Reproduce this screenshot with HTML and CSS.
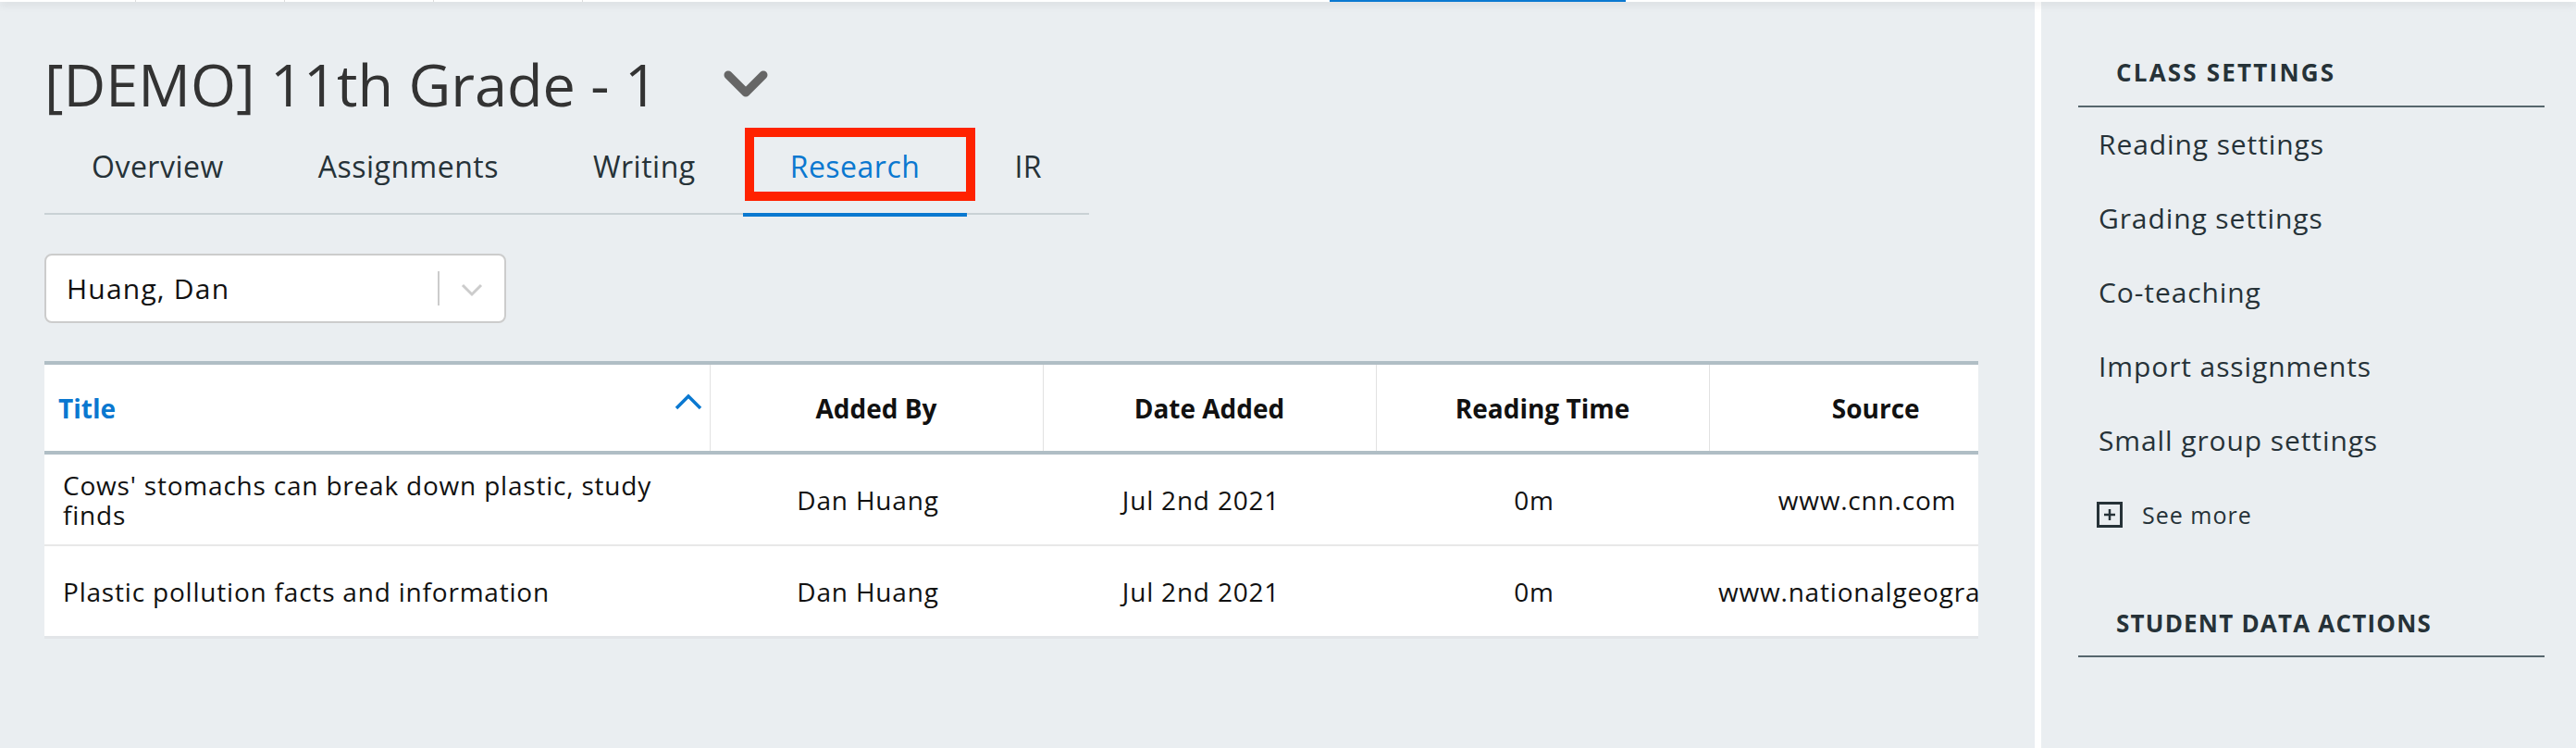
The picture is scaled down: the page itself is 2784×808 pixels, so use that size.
FILE: index.html
```html
<!DOCTYPE html>
<html lang="en">

<head>
  <meta charset="UTF-8">
  <meta name="viewport" content="width=device-width, initial-scale=1.0">
  <title>[DEMO] 11th Grade - 1 | Research</title>
  <link rel="stylesheet" href="styles.css">
</head>

<body>
  <div class="topbar">
    <div class="top-item"></div>
    <div class="top-item"></div>
    <div class="top-item"></div>
    <div class="top-item"></div>
    <div class="top-active"></div>
  </div>

  <div class="layout">
    <main class="main">
      <div class="class-title">
        <h1>[DEMO] 11th Grade - 1</h1>
        <svg class="title-caret" width="48" height="30" viewBox="0 0 48 30">
          <polyline points="5,5 24,24 43,5" fill="none" stroke="#666" stroke-width="9" stroke-linecap="round" stroke-linejoin="round" />
        </svg>
      </div>

      <nav class="tabs">
        <a class="tab">Overview</a>
        <a class="tab">Assignments</a>
        <a class="tab">Writing</a>
        <a class="tab active">Research<span class="highlight"></span></a>
        <a class="tab">IR</a>
      </nav>

      <div class="student-select">
        <span class="select-value">Huang, Dan</span>
        <span class="select-sep"></span>
        <svg class="select-caret" width="26" height="16" viewBox="0 0 26 16">
          <polyline points="3,3 13,13 23,3" fill="none" stroke="#cccccc" stroke-width="3" />
        </svg>
      </div>

      <div class="table-wrap">
        <table class="research-table">
          <colgroup>
            <col class="col-title">
            <col class="col-small">
            <col class="col-small">
            <col class="col-small">
            <col class="col-small">
          </colgroup>
          <thead>
            <tr>
              <th class="th-title">
                <div class="th-sort">
                  <span>Title</span>
                  <svg width="30" height="20" viewBox="0 0 30 20">
                    <polyline points="2,17 15,4 28,17" fill="none" stroke="#0a78d0" stroke-width="3.5" />
                  </svg>
                </div>
              </th>
              <th>Added By</th>
              <th>Date Added</th>
              <th>Reading Time</th>
              <th>Source</th>
            </tr>
          </thead>
          <tbody>
            <tr>
              <td class="td-title">Cows' stomachs can break down plastic, study finds</td>
              <td>Dan Huang</td>
              <td>Jul 2nd 2021</td>
              <td>0m</td>
              <td>www.cnn.com</td>
            </tr>
            <tr>
              <td class="td-title">Plastic pollution facts and information</td>
              <td>Dan Huang</td>
              <td>Jul 2nd 2021</td>
              <td>0m</td>
              <td>www.nationalgeographic.com</td>
            </tr>
          </tbody>
        </table>
      </div>
    </main>

    <aside class="sidebar">
      <h3 class="side-title">CLASS SETTINGS</h3>
      <ul class="side-list">
        <li>Reading settings</li>
        <li>Grading settings</li>
        <li>Co-teaching</li>
        <li>Import assignments</li>
        <li>Small group settings</li>
      </ul>
      <div class="see-more">
        <svg width="28" height="28" viewBox="0 0 28 28">
          <rect x="1.5" y="1.5" width="25" height="25" fill="none" stroke="#263238" stroke-width="3" />
          <line x1="8" y1="14" x2="20" y2="14" stroke="#263238" stroke-width="2.5" />
          <line x1="14" y1="8" x2="14" y2="20" stroke="#263238" stroke-width="2.5" />
        </svg>
        <span>See more</span>
      </div>
      <h3 class="side-title second">STUDENT DATA ACTIONS</h3>
    </aside>
  </div>
</body>

</html>
```

FILE: styles.css
```css
body {
  margin: 0;
  font-family: "Open Sans", "Noto Sans", sans-serif;
  background: #eaeef1;
  color: #263238;
}

.topbar {
  display: flex;
  height: 2px;
  background: white;
  box-shadow: 0 2px 8px rgba(0, 0, 0, 0.22);
  position: relative;
  z-index: 2;
}

.top-item {
  width: 160px;
  border-right: 1px solid #dddddd;
}

.top-item:first-child {
  width: 146px;
}

.top-active {
  width: 320px;
  margin-left: 807px;
  background: #0a78d0;
}

.layout {
  display: flex;
  min-height: 806px;
}

.main {
  width: 2199px;
  padding: 49px 61px 0 48px;
  box-sizing: border-box;
}

/* title row */
.class-title {
  display: flex;
  align-items: center;
  gap: 71px;
}

.class-title h1 {
  margin: 0;
  font-size: 63px;
  line-height: 80px;
  font-weight: 400;
  color: #333333;
}

/* tabs */
.tabs {
  display: flex;
  width: 1129px;
  margin-top: 7px;
  border-bottom: 2px solid #c9d1d5;
}

.tab {
  position: relative;
  padding: 22px 51px 30px;
  font-size: 32px;
  line-height: 40px;
  letter-spacing: 0.5px;
  color: #263238;
}

.tab.active {
  color: #0a78d0;
}

.tab.active::after {
  content: "";
  position: absolute;
  left: 0;
  right: 0;
  bottom: -4px;
  height: 4px;
  background: #0a78d0;
}

.highlight {
  position: absolute;
  left: 2px;
  top: 0;
  width: 249px;
  height: 79px;
  border: 10px solid #ff2200;
  box-sizing: border-box;
}

/* student dropdown */
.student-select {
  display: flex;
  align-items: center;
  width: 499px;
  height: 75px;
  margin-top: 42px;
  padding-left: 22px;
  box-sizing: border-box;
  background: white;
  border: 2px solid #cccccc;
  border-radius: 8px;
}

.select-value {
  flex: 1;
  font-size: 30px;
  line-height: 36px;
  letter-spacing: 1.2px;
  color: #111111;
}

.select-sep {
  width: 2px;
  height: 37px;
  background: #cccccc;
}

.select-caret {
  margin: 2px 22px 0 22px;
}

/* table */
.table-wrap {
  width: 2090px;
  margin-top: 41px;
  overflow: hidden;
  background: white;
  border-top: 4px solid #b0bec5;
  box-shadow: 0 3px 0 #e2e5e8;
}

.research-table {
  width: 2159px;
  table-layout: fixed;
  border-collapse: collapse;
}

.col-title {
  width: 719px;
}

.col-small {
  width: 360px;
}

.research-table th {
  height: 93px;
  padding: 0;
  font-size: 28px;
  line-height: 36px;
  font-weight: 700;
  color: #111111;
  text-align: center;
  border-left: 1px solid #e2e2e2;
  border-bottom: 4px solid #b0bec5;
}

.research-table th.th-title {
  border-left: none;
  text-align: left;
}

.th-sort {
  display: flex;
  justify-content: space-between;
  align-items: center;
  padding: 0 8px 0 15px;
  color: #0a78d0;
}

.th-sort svg {
  margin-top: -14px;
}

.research-table td {
  height: 97px;
  padding: 0 28px 0 10px;
  font-size: 28px;
  line-height: 32px;
  letter-spacing: 0.8px;
  color: #111111;
  text-align: center;
  white-space: nowrap;
  border-bottom: 2px solid #e8e8e8;
}

.research-table tr:last-child td {
  border-bottom: none;
}

.research-table td.td-title {
  padding: 0 40px 0 20px;
  text-align: left;
  white-space: normal;
}

/* sidebar */
.sidebar {
  flex: 1;
  padding: 0 34px 0 40px;
  border-left: 7px solid white;
}

.side-title {
  margin: 0;
  padding: 59px 0 19px 41px;
  font-size: 26px;
  line-height: 34px;
  font-weight: 700;
  letter-spacing: 2.2px;
  border-bottom: 2px solid #56666d;
}

.side-title.second {
  margin-top: 83px;
  padding-top: 0;
  padding-bottom: 18px;
  letter-spacing: 1.2px;
}

.side-list {
  list-style: none;
  margin: 0;
  padding: 0;
}

.side-list li {
  padding: 22px 0 22px 22px;
  font-size: 30px;
  line-height: 36px;
  letter-spacing: 0.9px;
}

.see-more {
  display: flex;
  align-items: center;
  gap: 21px;
  padding: 23px 0 0 20px;
  font-size: 25px;
  line-height: 34px;
  letter-spacing: 1px;
}
```
